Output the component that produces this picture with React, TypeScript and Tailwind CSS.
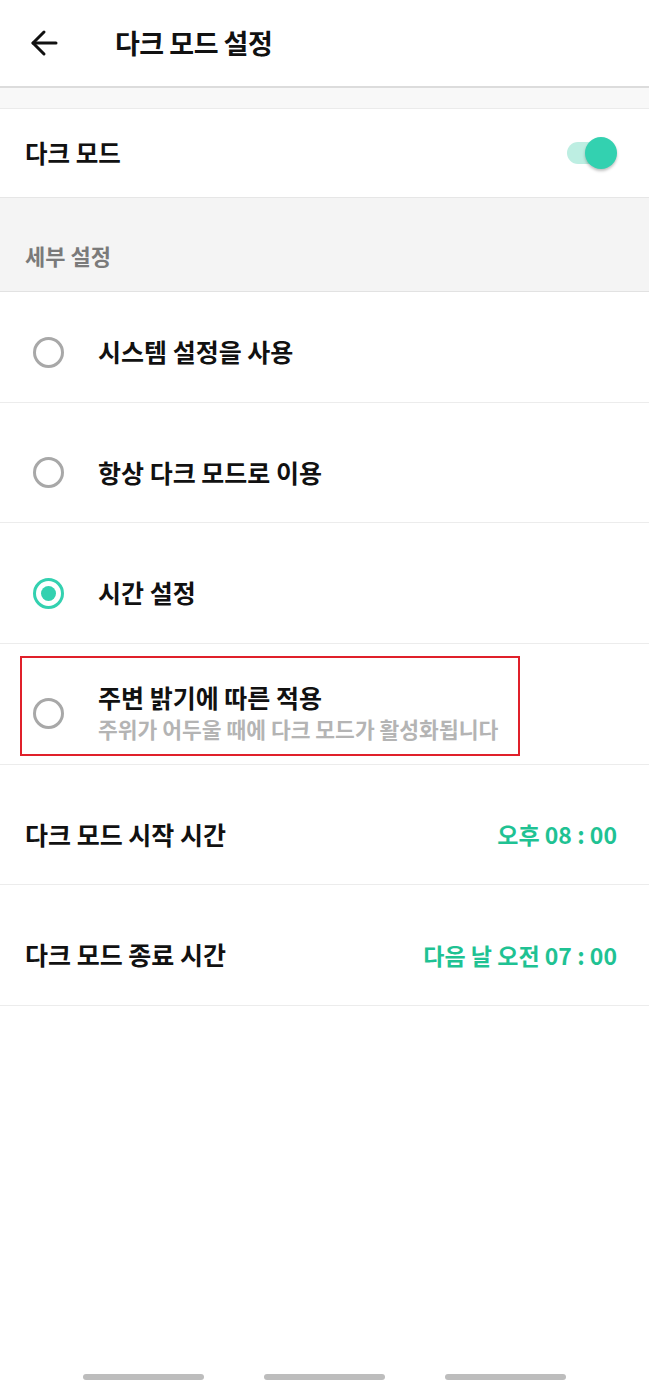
const font = { fontFamily: '"Noto Sans CJK KR", "Noto Sans", sans-serif' };

function Radio({ checked }: { checked?: boolean }) {
  return checked ? (
    <div className="flex h-[31px] w-[31px] shrink-0 items-center justify-center rounded-full border-[3px] border-[#33d1b0]">
      <div className="h-[15px] w-[15px] rounded-full bg-[#33d1b0]" />
    </div>
  ) : (
    <div className="h-[31px] w-[31px] shrink-0 rounded-full border-[3px] border-[#a8a8a8]" />
  );
}

export default function App() {
  const options = [
    { label: "시스템 설정을 사용", row: "h-[111px] pt-[10px]" },
    { label: "항상 다크 모드로 이용", row: "h-[120px] pt-[20px]" },
    { label: "시간 설정", row: "h-[121px] pt-[20px]", checked: true },
  ];

  return (
    <div className="relative flex h-[1389px] w-[649px] flex-col bg-white text-[#111]" style={font}>
      {/* Header */}
      <div className="flex h-[88px] shrink-0 items-center border-b-2 border-[#dcdcdc]">
        <svg className="ml-[30px] h-[28px] w-[28px]" viewBox="0 0 28 28" fill="none" stroke="#111" strokeWidth={3} strokeLinecap="round" strokeLinejoin="round">
          <path d="M3 14h23" />
          <path d="M14 3 3 14l11 11" />
        </svg>
        <h1 className="ml-[57px] text-[27px] font-bold tracking-[-0.5px]">다크 모드 설정</h1>
      </div>
      <div className="h-[21px] shrink-0 border-b border-[#ebebeb] bg-[#f8f8f8]" />

      {/* Dark mode toggle */}
      <div className="flex h-[89px] shrink-0 items-center justify-between border-b border-[#e6e6e6] px-[25px]">
        <span className="text-[24.5px] font-bold">다크 모드</span>
        <div className="relative mr-[7px] h-[32px] w-[50px]">
          <div className="absolute left-0 top-[5px] h-[22px] w-[36px] rounded-full bg-[#bdeee2]" />
          <div className="absolute right-0 top-0 h-[32px] w-[32px] rounded-full bg-[#33d1b0] shadow-[0_2px_3px_rgba(0,0,0,0.25)]" />
        </div>
      </div>

      {/* Section header */}
      <div className="flex h-[94px] shrink-0 items-end border-b border-[#e2e2e2] bg-[#f4f4f4] px-[25px] pb-[19px]">
        <span className="text-[22px] font-bold text-[#7a7a7a]">세부 설정</span>
      </div>

      {options.map((o) => (
        <div key={o.label} className={`flex shrink-0 items-center border-b border-[#ececec] pl-[33px] ${o.row}`}>
          <Radio checked={o.checked} />
          <span className="ml-[34px] text-[25px] font-bold">{o.label}</span>
        </div>
      ))}

      <div className="flex h-[121px] shrink-0 items-start border-b border-[#ececec] px-[20px] pt-[12px]">
        <div className="flex h-[100px] w-[500px] items-center border-2 border-[#e0202a] pl-[11px] pt-[14px]">
          <Radio />
          <div className="ml-[34px] flex flex-col leading-[31px]">
            <span className="text-[25px] font-bold">주변 밝기에 따른 적용</span>
            <span className="text-[21.5px] font-bold text-[#b4b4b4]">주위가 어두울 때에 다크 모드가 활성화됩니다</span>
          </div>
        </div>
      </div>

      <div className="flex h-[120px] shrink-0 items-center justify-between border-b border-[#ececec] px-[25px] pt-[20px]">
        <span className="text-[25px] font-bold">다크 모드 시작 시간</span>
        <span className="pr-[7px] text-[23px] font-bold text-[#1fc293]">오후 08 : 00</span>
      </div>
      <div className="flex h-[121px] shrink-0 items-center justify-between border-b border-[#ececec] px-[25px] pt-[20px]">
        <span className="text-[25px] font-bold">다크 모드 종료 시간</span>
        <span className="pr-[7px] text-[23px] font-bold text-[#1fc293]">다음 날 오전 07 : 00</span>
      </div>

      {/* System nav bar */}
      <div className="mt-auto flex h-[15px] shrink-0 items-start justify-center gap-[60px]">
        <div className="h-[6px] w-[121px] rounded-full bg-[#bdbdbd]" />
        <div className="h-[6px] w-[121px] rounded-full bg-[#bdbdbd]" />
        <div className="h-[6px] w-[121px] rounded-full bg-[#bdbdbd]" />
      </div>
    </div>
  );
}
